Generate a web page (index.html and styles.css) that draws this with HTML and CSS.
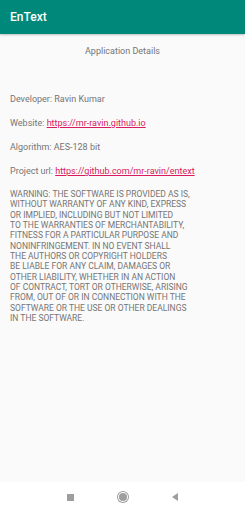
FILE: index.html
```html
<!DOCTYPE html>
<html lang="en">
<head>
    <meta charset="UTF-8">
    <meta name="viewport" content="width=device-width, initial-scale=1.0">
    <title>EnText</title>
    <link rel="stylesheet" href="styles.css">
</head>
<body>

<div class="app">
  <header class="toolbar">EnText</header>

  <main class="content">
    <h1 class="heading">Application Details</h1>

    <p class="info">Developer: Ravin Kumar</p>
    <p class="info">Website: <a href="#">https://mr-ravin.github.io</a></p>
    <p class="info">Algorithm: AES-128 bit</p>
    <p class="info">Project url: <a href="#">https://github.com/mr-ravin/entext</a></p>

    <p class="license">WARNING: THE SOFTWARE IS PROVIDED AS IS,<br>
WITHOUT WARRANTY OF ANY KIND, EXPRESS<br>
OR IMPLIED, INCLUDING BUT NOT LIMITED<br>
TO THE WARRANTIES OF MERCHANTABILITY,<br>
FITNESS FOR A PARTICULAR PURPOSE AND<br>
NONINFRINGEMENT. IN NO EVENT SHALL<br>
THE AUTHORS OR COPYRIGHT HOLDERS<br>
BE LIABLE FOR ANY CLAIM, DAMAGES OR<br>
OTHER LIABILITY, WHETHER IN AN ACTION<br>
OF CONTRACT, TORT OR OTHERWISE, ARISING<br>
FROM, OUT OF OR IN CONNECTION WITH THE<br>
SOFTWARE OR THE USE OR OTHER DEALINGS<br>
IN THE SOFTWARE.</p>
  </main>

  <nav class="navbar">
    <span class="nav-square"></span>
    <span class="nav-home"></span>
    <span class="nav-back"></span>
  </nav>
</div>

</body>
</html>
```

FILE: styles.css
```css
body {
    margin: 0;
    font-family: Roboto, "Liberation Sans", sans-serif;
    background: #fafafa;
}
.app {
    height: 512px;
    display: flex;
    flex-direction: column;
}
.toolbar {
    height: 34px;
    background-color: #00897b;
    color: white;
    font-size: 12px;
    font-weight: 500;
    line-height: 34px;
    padding-left: 10px;
    box-shadow: 0 1px 2px rgba(0, 0, 0, 0.25);
}
.content {
    flex: 1;
    padding: 0 10px;
    color: #757575;
}
.heading {
    font-size: 9px;
    font-weight: normal;
    text-align: center;
    margin: 11px 0 36px;
    line-height: 12px;
}
.info {
    font-size: 9px;
    line-height: 12px;
    margin: 0 0 12px;
}
.info a {
    color: #d81b60;
}
.license {
    font-size: 8.5px;
    line-height: 10.33px;
    margin: 2px 0 0;
}
.navbar {
    height: 30px;
    background: white;
    display: flex;
    justify-content: center;
    align-items: center;
    gap: 45px;
}
.nav-square {
    width: 7px;
    height: 7px;
    background: #9e9e9e;
}
.nav-home {
    width: 8px;
    height: 8px;
    border-radius: 50%;
    background: #9e9e9e;
    box-shadow: 0 0 0 1px white, 0 0 0 2px #9e9e9e;
}
.nav-back {
    width: 0;
    height: 0;
    border-top: 4px solid transparent;
    border-bottom: 4px solid transparent;
    border-right: 6px solid #9e9e9e;
}
```
